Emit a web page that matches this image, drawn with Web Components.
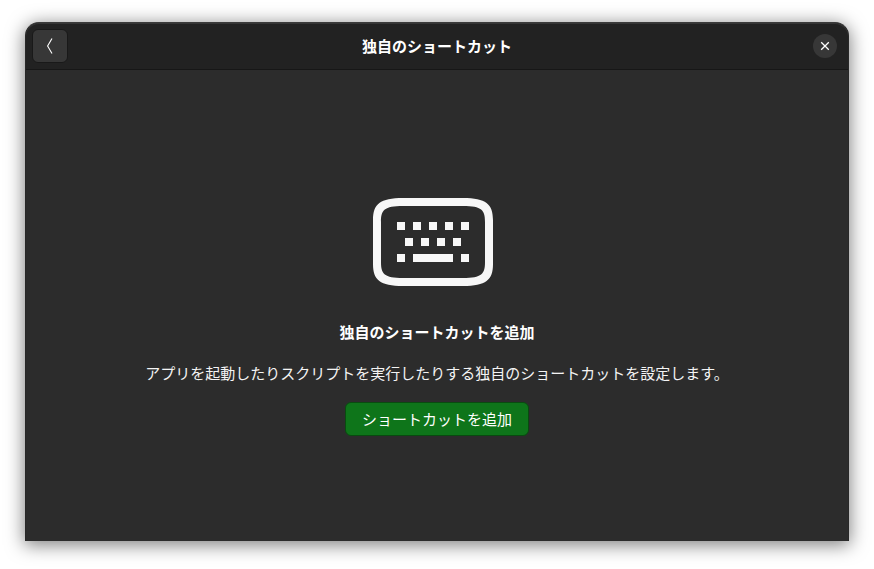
<!DOCTYPE html>
<html lang="ja">
<head>
<meta charset="utf-8">
<title>独自のショートカット</title>
<style>
  html { height: 100%; }
  body {
    box-sizing: border-box;
    min-height: 100%;
    margin: 0;
    padding: 22px 25px 28px;
    display: flex;
    background: #fff;
    color: #fff;
    font: 15px/22px "Noto Sans CJK JP", sans-serif;
  }
</style>
</head>
<body>
<app-window>
  <title-bar slot="header">
    <icon-button slot="start" kind="back" label="戻る"></icon-button>
    独自のショートカット
    <icon-button slot="end" kind="close" label="閉じる"></icon-button>
  </title-bar>
  <status-page>
    <keyboard-icon slot="icon"></keyboard-icon>
    <span slot="title">独自のショートカットを追加</span>
    アプリを起動したりスクリプトを実行したりする独自のショートカットを設定します。
    <action-button slot="action">ショートカットを追加</action-button>
  </status-page>
</app-window>

<script>
  function define(name, html, setup) {
    customElements.define(name, class extends HTMLElement {
      constructor() {
        super();
        this.attachShadow({ mode: "open" }).innerHTML = html;
      }
      connectedCallback() {
        if (setup) setup(this, this.shadowRoot);
      }
    });
  }

  define("app-window", `
    <style>
      :host {
        flex: 1;
        min-width: 0;
        display: flex;
        flex-direction: column;
        box-sizing: border-box;
        border: 1px solid #282828;
        border-top-color: #3a3a3a;
        border-bottom: 0;
        border-radius: 14px 14px 0 0;
        background: #2c2c2c;
        box-shadow: 0 3px 18px 1px rgba(0, 0, 0, .5);
      }
    </style>
    <slot name="header"></slot>
    <slot></slot>`);

  define("title-bar", `
    <style>
      :host { display: block; }
      header {
        display: grid;
        grid-template-columns: 1fr auto 1fr;
        align-items: center;
        box-sizing: border-box;
        height: 47px;
        padding: 0 6px;
        border-bottom: 1px solid #171717;
        border-radius: 13px 13px 0 0;
        background: #222;
        box-shadow: inset 0 1px #363636;
      }
      h1 { margin: 0; font: inherit; font-weight: 700; }
      .end { justify-self: end; padding-right: 5px; }
    </style>
    <header>
      <slot name="start"></slot>
      <h1><slot></slot></h1>
      <div class="end"><slot name="end"></slot></div>
    </header>`);

  define("icon-button", `
    <style>
      :host { display: block; }
      button {
        display: grid;
        place-items: center;
        box-sizing: border-box;
        padding: 0;
        color: #fff;
        background: #373737;
      }
      svg { width: 16px; height: 16px; fill: none; stroke: currentColor; }
      .back { width: 36px; height: 34px; border: 1px solid #191919; border-radius: 6px; }
      .back svg { height: 20px; }
      .close { width: 24px; height: 24px; border: 0; border-radius: 50%; }
    </style>
    <button type="button"></button>`, (host, root) => {
      const kind = host.getAttribute("kind");
      const button = root.querySelector("button");
      button.className = kind;
      button.setAttribute("aria-label", host.getAttribute("label"));
      button.innerHTML = kind === "back"
        ? '<svg viewBox="0 0 16 20" stroke-width="1.1"><path d="M10 2.5 5.6 10 10 17.5"/></svg>'
        : '<svg viewBox="0 0 16 16" stroke-width="1.3"><path d="m4.2 4.2 7.6 7.6m0-7.6-7.6 7.6"/></svg>';
    });

  define("status-page", `
    <style>
      :host { display: block; flex: 1; }
      main {
        display: flex;
        flex-direction: column;
        align-items: center;
        justify-content: center;
        box-sizing: border-box;
        height: 100%;
        padding: 2px 16px 0;
        text-align: center;
      }
      h2 { margin: 15px 0 19px; font: inherit; font-weight: 700; }
      p { margin: 0 0 18px; color: #f4f4f4; }
    </style>
    <main>
      <slot name="icon"></slot>
      <h2><slot name="title"></slot></h2>
      <p><slot></slot></p>
      <slot name="action"></slot>
    </main>`);

  define("keyboard-icon", `
    <style>
      :host { display: block; }
      svg { display: block; width: 128px; height: 128px; fill: #f7f7f7; }
    </style>
    <svg viewBox="0 0 128 128" aria-hidden="true">
      <path fill-rule="evenodd" d="M30 20H90C113 20 120 26 120 42V86C120 102 113 108 90 108H30C7 108 0 102 0 86V42C0 26 7 20 30 20ZM30 28C11 28 8 32 8 44V84C8 96 11 100 30 100H90C109 100 112 96 112 84V44C112 32 109 28 90 28Z"/>
      <path d="M24 44h8v8h-8zm16 0h8v8h-8zm16 0h8v8h-8zm16 0h8v8h-8zm16 0h8v8h-8zM32 60h8v8h-8zm16 0h8v8h-8zm16 0h8v8h-8zm16 0h8v8h-8zM24 76h8v8h-8zm16 0h40v8H40zm48 0h8v8h-8z"/>
    </svg>`);

  define("action-button", `
    <style>
      :host { display: block; }
      button {
        box-sizing: border-box;
        height: 34px;
        padding: 0 16px;
        border: 1px solid #094b10;
        border-radius: 6px;
        background: #0e751a;
        color: #fff;
        font: inherit;
      }
    </style>
    <button type="button"><slot></slot></button>`);
</script>
</body>
</html>
